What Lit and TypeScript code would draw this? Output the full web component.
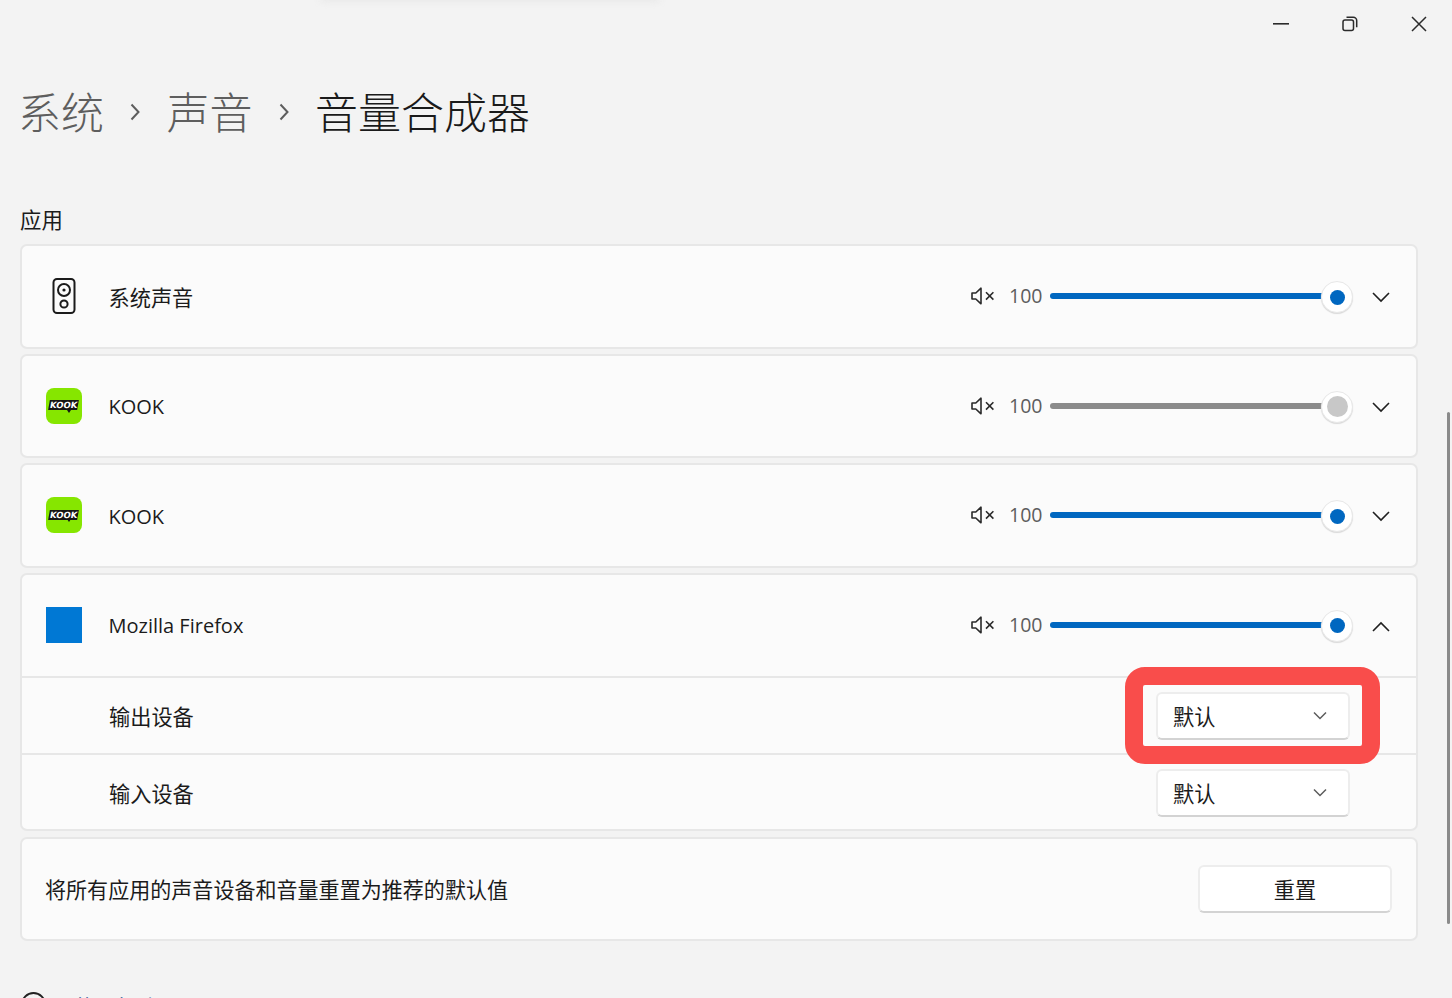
import { LitElement, html, css, svg } from "lit";
import { customElement } from "lit/decorators.js";

const speaker = svg`<svg class="ico" width="36" height="36" viewBox="0 0 36 36" fill="none" stroke="#1b1b1b" stroke-width="2">
  <rect x="7.5" y="1" width="21" height="34" rx="3.5"/>
  <circle cx="18" cy="12" r="6"/><circle cx="18" cy="12" r="1.6" fill="#1b1b1b" stroke="none"/>
  <circle cx="18" cy="26" r="3.6"/></svg>`;

const kook = html`<div class="kook"><span class="kook-word">KOOK</span><span class="kook-tail"></span></div>`;
const square = html`<div class="square"></div>`;

const mute = svg`<svg width="25" height="18" viewBox="0 0 25 18" fill="none" stroke="#2a2a2a" stroke-width="1.6">
  <path d="M2 6h3.8L11 1.2v15.6L5.8 12H2z" stroke-linejoin="round"/>
  <path d="M16 5.2l7.4 7.4M23.4 5.2L16 12.6"/></svg>`;

const chev = (up = false) => svg`<svg class="chev" width="18" height="11" viewBox="0 0 18 11" fill="none" stroke="#1f1f1f" stroke-width="1.6">
  <path d="${up ? "M1 10L9 2l8 8" : "M1 1l8 8 8-8"}"/></svg>`;

const chevSmall = svg`<svg width="14" height="9" viewBox="0 0 14 9" fill="none" stroke="#5c5c5c" stroke-width="1.5"><path d="M1 1.5l6 6 6-6"/></svg>`;

const crumbChev = svg`<svg width="10" height="18" viewBox="0 0 10 18" fill="none" stroke="#5d5d5d" stroke-width="2"><path d="M1.5 1.5L8.5 9l-7 7.5"/></svg>`;

@customElement("app-root")
export class AppRoot extends LitElement {
  static styles = css`
    :host { display: block; position: relative; width: 1452px; height: 998px; overflow: hidden; background: #f3f3f3; font-family: "Open Sans", "Noto Sans CJK SC", sans-serif; color: #1b1b1b; }
    .glow { position: absolute; left: 320px; top: -6px; width: 340px; height: 8px; background: #e9e9e9; filter: blur(3px); border-radius: 4px; }
    .winbar { display: flex; justify-content: flex-end; height: 47px; }
    .winbtn { width: 69px; height: 47px; padding-left: 2px; box-sizing: border-box; display: flex; align-items: center; justify-content: center; }
    .winbar svg { display: block; }
    .page { padding: 0 34px 0 20px; }
    .crumbs { display: flex; align-items: center; height: 130px; margin-left: -2px; padding-top: 2px; box-sizing: border-box; font-size: 43px; font-weight: 300; line-height: 60px; color: #5e5e5e; }
    .crumbs .now { color: #1a1a1a; }
    .crumbs svg { margin: -2px 26.5px 0 26px; flex: none; }
    .section { font-size: 21.4px; line-height: 30px; height: 67px; padding-top: 28px; box-sizing: border-box; }
    .stack { display: flex; flex-direction: column; gap: 5px; }
    .card { background: #fbfbfb; border: 2px solid #e7e7e7; border-radius: 7px; box-sizing: border-box; }
    .card.last { margin-top: 1px; }
    .row { height: 100.6px; display: flex; align-items: center; box-sizing: border-box; padding-left: 24px; font-size: 21.2px; }
    .row.in { height: 101px; padding-bottom: 1.4px; }
    .icon-slot { width: 36px; height: 36px; display: flex; align-items: center; justify-content: center; margin-right: 26.5px; flex: none; }
    .name { flex: 1; }
    .latin { font-size: 20px; padding-top: 2px; }
    .vol { display: flex; align-items: center; }
    .num { color: #5d5d5d; width: 31px; margin: -1px 0 0 14px; font-size: 19.5px; text-align: left; }
    .track { width: 274px; height: 6px; border-radius: 3px; background: #0067c0; margin-left: 10px; }
    .track.off { background: #8b8b8b; }
    .thumb { width: 32px; height: 32px; margin: 2px 0 0 -3px; border-radius: 50%; background: #fff; border: 1px solid #e8e8e8; box-shadow: 0 1px 1px #d8d8d8; box-sizing: border-box; display: flex; align-items: center; justify-content: center; }
    .dot { width: 15px; height: 15px; border-radius: 50%; background: #0067c0; }
    .dot.off { width: 21px; height: 21px; background: #c8c8c8; }
    .chev-slot { width: 18px; margin: 3px 26px 0 19px; display: flex; }
    .sub { height: 77px; display: flex; align-items: center; border-top: 2px solid #e7e7e7; padding-left: 87px; font-size: 21.2px; box-sizing: border-box; }
    .sub.end { height: 76px; padding-top: 1px; }
    .combo { width: 194px; height: 48.5px; margin: 1px 66px 0 0; background: #fff; border: 2px solid #ededed; border-bottom-color: #d3d3d3; border-radius: 6px; box-sizing: border-box; display: flex; align-items: center; justify-content: space-between; padding: 0 21px 0 15px; font-size: 21.2px; }
    .reset-row { height: 100px; display: flex; align-items: center; padding: 0 24px 0 23px; font-size: 21.05px; box-sizing: border-box; }
    .btn { width: 194px; height: 48.5px; background: #fff; border: 2px solid #ededed; border-bottom-color: #d3d3d3; border-radius: 6px; box-sizing: border-box; display: flex; align-items: center; justify-content: center; font-size: 21.2px; }
    .help { display: flex; align-items: center; gap: 27px; margin-top: 51px; padding-left: 1px; font-size: 21px; color: #1a4f8c; line-height: 26px; }
    .help span { margin-top: 2px; }
    .helpico { width: 25px; height: 25px; border: 2px solid #222; border-radius: 50%; box-sizing: border-box; flex: none; margin-top: -2px; }
    .mark { position: absolute; left: 1125px; top: 666.5px; width: 254.5px; height: 97px; border: 18.5px solid #f94d4b; border-radius: 20px; box-sizing: border-box; pointer-events: none; }
    .scroll { position: absolute; left: 1447px; top: 412px; width: 3px; height: 512px; border-radius: 2px; background: #8a8a8a; }
    .kook { width: 36px; height: 36px; border-radius: 8px; background: #86e600; display: flex; align-items: center; justify-content: center; position: relative; }
    .kook-word { background: #151515; color: #fff; font: 700 8.5px/10px "DejaVu Sans", sans-serif; padding: 0 1px; margin-top: -1px; transform: skewX(-10deg); }
    .kook-tail { position: absolute; left: 21px; top: 22px; width: 0; height: 0; border-left: 2.5px solid transparent; border-right: 2.5px solid transparent; border-top: 3.5px solid #151515; }
    .square { width: 36px; height: 36px; background: #0078d4; }
  `;

  private appRow(icon: unknown, name: string, off = false, up = false, latin = false) {
    return html`<div class="row ${up ? "in" : ""}">
      <div class="icon-slot">${icon}</div>
      <div class="name ${latin ? "latin" : ""}">${name}</div>
      <div class="vol">
        ${mute}<span class="num">100</span>
        <div class="track ${off ? "off" : ""}"></div>
        <div class="thumb"><div class="dot ${off ? "off" : ""}"></div></div>
      </div>
      <div class="chev-slot">${chev(up)}</div>
    </div>`;
  }

  render() {
    return html`
      <div class="glow"></div>
      <div class="winbar">
        <div class="winbtn"><svg width="16" height="2" viewBox="0 0 16 2"><rect width="16" height="1.6" fill="#2b2b2b"/></svg></div>
        <div class="winbtn"><svg width="16" height="16" viewBox="0 0 16 16" fill="none" stroke="#2b2b2b" stroke-width="1.5"><rect x="1" y="4" width="10.5" height="10.5" rx="2"/><path d="M4.5 1.2h6.8a3.4 3.4 0 0 1 3.4 3.4v6.6"/></svg></div>
        <div class="winbtn"><svg width="16" height="16" viewBox="0 0 16 16" fill="none" stroke="#2b2b2b" stroke-width="1.5"><path d="M1 1l14 14M15 1L1 15"/></svg></div>
      </div>
      <div class="page">
        <div class="crumbs">
          <span>系统</span>${crumbChev}<span>声音</span>${crumbChev}<span class="now">音量合成器</span>
        </div>
        <div class="section">应用</div>
        <div class="stack">
          <div class="card">${this.appRow(speaker, "系统声音")}</div>
          <div class="card">${this.appRow(kook, "KOOK", true, false, true)}</div>
          <div class="card">${this.appRow(kook, "KOOK", false, false, true)}</div>
          <div class="card">
            ${this.appRow(square, "Mozilla Firefox", false, true, true)}
            <div class="sub"><div class="name">输出设备</div><div class="combo"><span>默认</span>${chevSmall}</div></div>
            <div class="sub end"><div class="name">输入设备</div><div class="combo"><span>默认</span>${chevSmall}</div></div>
          </div>
          <div class="card last">
            <div class="reset-row"><div class="name">将所有应用的声音设备和音量重置为推荐的默认值</div><div class="btn">重置</div></div>
          </div>
        </div>
        <div class="help"><div class="helpico"></div><span>获取帮助</span></div>
      </div>
      <div class="mark"></div>
      <div class="scroll"></div>
    `;
  }
}
